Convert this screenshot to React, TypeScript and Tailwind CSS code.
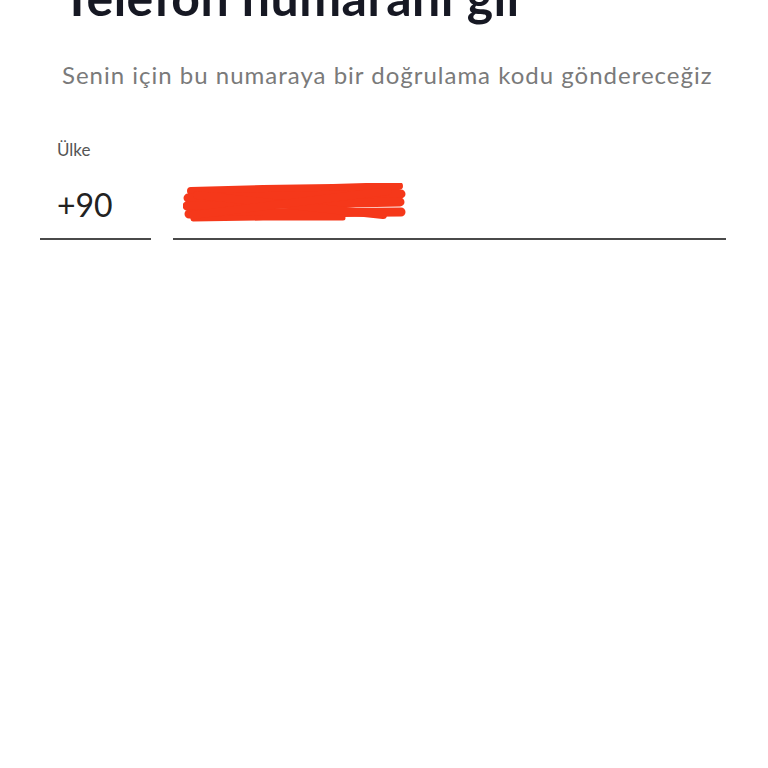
export default function App() {
  return (
    <div className="w-[768px] h-[768px] bg-white overflow-hidden relative" style={{ fontFamily: 'Lato, "Noto Sans", sans-serif' }}>
      {/* Header */}
      <div className="pl-[62px] pr-[40px] -mt-[33px]">
        <h1 className="text-[50px] leading-[60px] font-bold text-[#161823] tracking-[0.5px]">Telefon numaranı gir</h1>
        <p className="mt-[33px] text-[24px] leading-[30px] text-[#7a7a7a] tracking-[1px] whitespace-nowrap">
          Senin için bu numaraya bir doğrulama kodu göndereceğiz
        </p>
      </div>

      {/* Inputs */}
      <div className="mt-[50px] flex gap-[22px] pl-[40px] pr-[42px]">
        <div className="w-[111px] flex flex-col">
          <span className="pl-[17px] text-[17px] leading-[20px] text-[#555]">Ülke</span>
          <div className="pl-[17px] pt-[26px] h-[80px] text-[32px] leading-[38px] text-[#222] border-b-2 border-[#4a4a4a]">
            +90
          </div>
        </div>
        <div className="flex-1 flex flex-col justify-end">
          <div className="h-[80px] pt-[23px] pl-[10px] border-b-2 border-[#4a4a4a]">
            <svg width="224" height="42" viewBox="0 0 224 42" className="block">
              <g stroke="#f5381a" strokeLinecap="round" fill="none">
                <path d="M8 8 L80 6 L150 5 L216 3" strokeWidth="8" />
                <path d="M5 15 L110 13 L218 11" strokeWidth="9" />
                <path d="M4 23 L120 21 L217 19" strokeWidth="9" />
                <path d="M6 31 L100 30 L218 29" strokeWidth="9" />
                <path d="M10 36 L80 35 L160 35" strokeWidth="5" />
                <path d="M14 12 L200 32" strokeWidth="8" />
                <path d="M10 32 L205 8" strokeWidth="8" />
              </g>
            </svg>
          </div>
        </div>
      </div>
    </div>
  );
}
